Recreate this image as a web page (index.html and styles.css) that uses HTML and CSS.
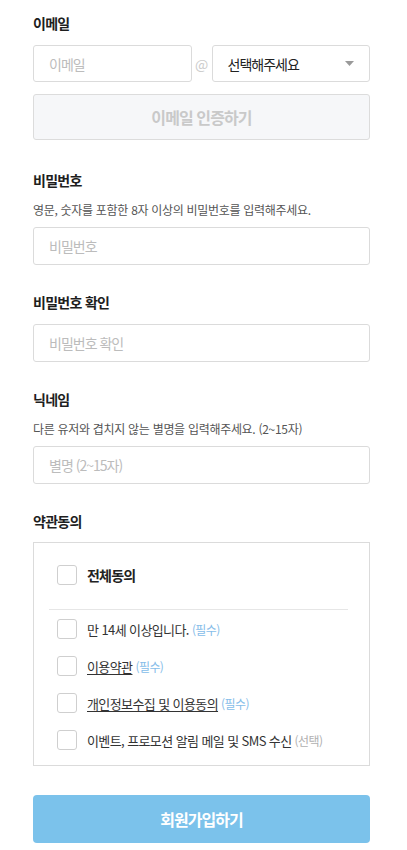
FILE: index.html
```html
<!DOCTYPE html>
<html lang="ko">
<head>
<meta charset="utf-8">
<title>회원가입</title>
<link rel="stylesheet" href="styles.css">
</head>
<body>
<form class="form">
  <div class="field field-first">
    <div class="label">이메일</div>
    <div class="email-row">
      <input class="input" type="text" placeholder="이메일">
      <span class="at">@</span>
      <div class="select">
        <span>선택해주세요</span>
        <svg class="caret" width="9" height="5" viewBox="0 0 9 5"><path d="M0 0H9L4.5 5Z" fill="#9a9a9a"/></svg>
      </div>
    </div>
    <button type="button" class="btn-verify">이메일 인증하기</button>
  </div>

  <div class="field field-second">
    <div class="label label-help">비밀번호</div>
    <div class="help">영문, 숫자를 포함한 8자 이상의 비밀번호를 입력해주세요.</div>
    <input class="input" type="password" placeholder="비밀번호">
  </div>

  <div class="field">
    <div class="label">비밀번호 확인</div>
    <input class="input" type="password" placeholder="비밀번호 확인">
  </div>

  <div class="field">
    <div class="label label-help">닉네임</div>
    <div class="help">다른 유저와 겹치지 않는 별명을 입력해주세요. (2~15자)</div>
    <input class="input" type="text" placeholder="별명 (2~15자)">
  </div>

  <div class="field">
    <div class="label label-terms">약관동의</div>
    <div class="terms">
      <label class="row row-all">
        <span class="box"></span>
        <span class="all-text">전체동의</span>
      </label>
      <div class="divider"></div>
      <div class="items">
        <label class="row">
          <span class="box"></span>
          <span class="item-text">만 14세 이상입니다. <span class="req">(필수)</span></span>
        </label>
        <label class="row">
          <span class="box"></span>
          <span class="item-text"><span class="link">이용약관</span> <span class="req">(필수)</span></span>
        </label>
        <label class="row">
          <span class="box"></span>
          <span class="item-text"><span class="link">개인정보수집 및 이용동의</span> <span class="req">(필수)</span></span>
        </label>
        <label class="row">
          <span class="box"></span>
          <span class="item-text">이벤트, 프로모션 알림 메일 및 SMS 수신 <span class="opt">(선택)</span></span>
        </label>
      </div>
    </div>
  </div>

  <button type="button" class="btn-submit">회원가입하기</button>
</form>
</body>
</html>
```

FILE: styles.css
```css
* {
  box-sizing: border-box;
}

body {
  margin: 0;
  background: #ffffff;
  font-family: "Noto Sans CJK KR", "Noto Sans", sans-serif;
  color: #222222;
}

.form {
  width: 337px;
  margin-left: 33px;
  padding-top: 12px;
  display: flex;
  flex-direction: column;
}

.field {
  display: flex;
  flex-direction: column;
  margin-top: 26px;
}

.field-first {
  margin-top: 0;
}

.field-second {
  margin-top: 29px;
}

.label {
  font-size: 14px;
  font-weight: 700;
  line-height: 22px;
  letter-spacing: -0.7px;
  color: #1e1e1e;
  margin-bottom: 11px;
}

.label-help {
  margin-bottom: 10px;
}

.label-terms {
  margin-bottom: 10px;
}

.help {
  font-size: 12px;
  line-height: 18px;
  letter-spacing: -0.3px;
  color: #555555;
  margin-bottom: 8px;
}

.input {
  display: block;
  width: 100%;
  min-width: 0;
  height: 38px;
  margin: 0;
  padding: 0 0 0 15px;
  border: 1px solid #dbdbdb;
  border-radius: 3px;
  font-family: inherit;
  font-size: 14px;
  letter-spacing: -1px;
  color: #222222;
  background: #ffffff;
  outline: none;
}

.input::placeholder {
  color: #bcbcbc;
}

.email-row {
  display: grid;
  grid-template-columns: 1fr 20px 1fr;
  align-items: center;
  height: 37px;
}

.email-row .input {
  height: 37px;
}

.at {
  text-align: center;
  font-size: 14px;
  color: #cccccc;
}

.select {
  min-width: 0;
  height: 37px;
  display: flex;
  align-items: center;
  justify-content: space-between;
  padding: 0 15px;
  border: 1px solid #dbdbdb;
  border-radius: 3px;
  font-size: 14px;
  letter-spacing: -1px;
  color: #222222;
}

.caret {
  display: block;
}

.btn-verify {
  margin-top: 12px;
  height: 46px;
  width: 100%;
  border: 1px solid #dcdcdc;
  border-radius: 3px;
  background: #f6f7f9;
  font-family: inherit;
  font-size: 16px;
  font-weight: 700;
  letter-spacing: -0.9px;
  color: #c9c9c9;
}

.terms {
  border: 1px solid #dbdbdb;
  padding: 22px 0 15px 23px;
  display: flex;
  flex-direction: column;
}

.row {
  display: flex;
  align-items: center;
  height: 20px;
}

.box {
  width: 20px;
  height: 20px;
  border: 1px solid #cfcfcf;
  border-radius: 3px;
  background: #ffffff;
  flex: none;
  margin-right: 10px;
}

.all-text {
  font-size: 14px;
  font-weight: 700;
  letter-spacing: -0.8px;
  color: #222222;
}

.divider {
  height: 1px;
  background: #e6e6e6;
  margin: 24px 21px 9px -8px;
}

.items {
  display: flex;
  flex-direction: column;
  gap: 17px;
}

.item-text {
  font-size: 13px;
  letter-spacing: -0.6px;
  color: #333333;
  white-space: nowrap;
}

.link {
  text-decoration: underline;
  text-underline-offset: 2px;
}

.req {
  font-size: 12px;
  color: #86bde9;
}

.opt {
  font-size: 12px;
  color: #b0b0b0;
}

.btn-submit {
  margin-top: 29px;
  height: 48px;
  width: 100%;
  border: none;
  border-radius: 4px;
  background: #7bc2eb;
  font-family: inherit;
  font-size: 16px;
  font-weight: 700;
  letter-spacing: -1px;
  color: #ffffff;
}
```
